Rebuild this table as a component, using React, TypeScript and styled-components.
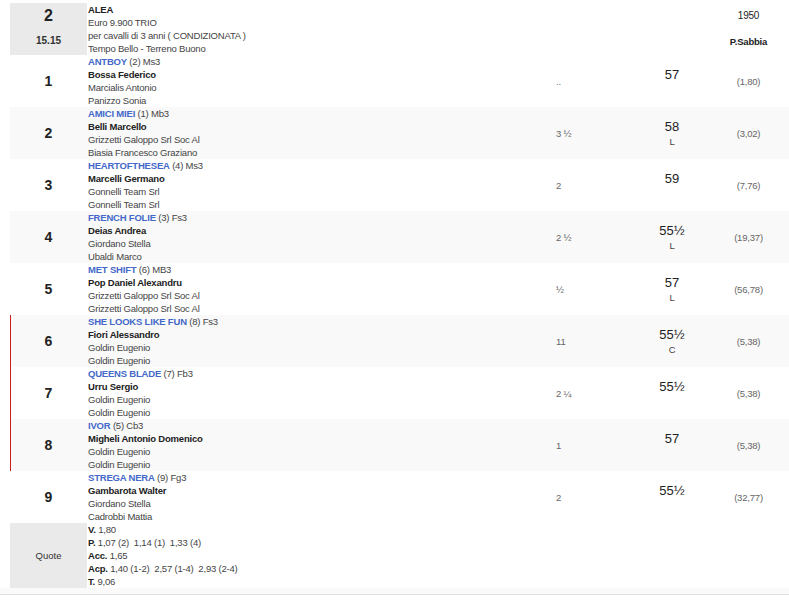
import styled, { createGlobalStyle } from 'styled-components';

const GlobalStyle = createGlobalStyle`
    body {
        margin: 0;
        background: #ffffff;
        font-family: "Liberation Sans", Arial, sans-serif;
        font-size: 9.5px;
        letter-spacing: -0.2px;
        color: #444444;
    }
`;

const Page = styled.div`
    padding: 3px 0 0 10px;
`;

const Row = styled.div<{$alt?: boolean; $flag?: boolean}>`
    display: grid;
    grid-template-columns: 77px 469px 80px 72px 1fr;
    background-color: ${props => (props.$alt ? '#f9f9f9' : '#ffffff')};
    box-shadow: ${props => (props.$flag ? 'inset 1px 0 0 #cc1d1d' : 'none')};
`;

const NumCell = styled.div<{$head?: boolean}>`
    display: flex;
    flex-direction: column;
    align-items: center;
    justify-content: center;
    background-color: ${props => (props.$head ? '#eaeaea' : 'transparent')};
    color: #222222;
    font-size: 14px;
    font-weight: bold;
    letter-spacing: 0;
`;

const HeadCell = styled(NumCell)`
    justify-content: flex-start;
    padding-top: 3px;
    gap: 8px;
`;

const RaceNumber = styled.span`
    font-size: 16px;
    line-height: 20px;
`;

const RaceTime = styled.span`
    font-size: 10px;
    line-height: 13px;
    color: #333333;
`;

const QuoteLabel = styled.span`
    font-size: 9.5px;
    font-weight: normal;
    color: #333333;
`;

const Info = styled.div`
    display: flex;
    flex-direction: column;
    padding-left: 1px;
    line-height: 13px;
    white-space: pre;
`;

const Strong = styled.span`
    font-weight: bold;
    color: #222222;
`;

const HorseName = styled.span`
    font-weight: bold;
    color: #4468c9;
`;

const DistCell = styled.div`
    display: flex;
    align-items: center;
    font-size: 9.5px;
    color: #666666;
`;

const WeightCell = styled.div`
    display: flex;
    flex-direction: column;
    align-items: center;
    justify-content: center;
`;

const Weight = styled.span`
    font-size: 13px;
    line-height: 16px;
    letter-spacing: 0;
    color: #222222;
`;

const Blinker = styled.span`
    line-height: 13px;
    height: 13px;
    color: #444444;
`;

const OddsCell = styled.div`
    display: flex;
    align-items: center;
    justify-content: center;
    color: #666666;
`;

const HeadInfoCell = styled.div`
    display: flex;
    flex-direction: column;
    align-items: center;
    padding-top: 6px;
    gap: 13px;
    font-size: 10px;
    line-height: 13px;
    color: #222222;
`;

const Track = styled.span`
    font-size: 9.5px;
    font-weight: bold;
`;

const Footer = styled.div`
    height: 6px;
    background-color: #fafafa;
    border-bottom: 1px solid #dedede;
`;

interface Runner {
    pos: number;
    name: string;
    extra: string;
    jockey: string;
    trainer: string;
    owner: string;
    dist: string;
    weight: string;
    blinker: string;
    odds: string;
}

const runners: Runner[] = [
    {pos: 1, name: 'ANTBOY', extra: ' (2) Ms3', jockey: 'Bossa Federico', trainer: 'Marcialis Antonio', owner: 'Panizzo Sonia', dist: '..', weight: '57', blinker: '', odds: '(1,80)'},
    {pos: 2, name: 'AMICI MIEI', extra: ' (1) Mb3', jockey: 'Belli Marcello', trainer: 'Grizzetti Galoppo Srl Soc Al', owner: 'Biasia Francesco Graziano', dist: '3 ½', weight: '58', blinker: 'L', odds: '(3,02)'},
    {pos: 3, name: 'HEARTOFTHESEA', extra: ' (4) Ms3', jockey: 'Marcelli Germano', trainer: 'Gonnelli Team Srl', owner: 'Gonnelli Team Srl', dist: '2', weight: '59', blinker: '', odds: '(7,76)'},
    {pos: 4, name: 'FRENCH FOLIE', extra: ' (3) Fs3', jockey: 'Deias Andrea', trainer: 'Giordano Stella', owner: 'Ubaldi Marco', dist: '2 ½', weight: '55½', blinker: 'L', odds: '(19,37)'},
    {pos: 5, name: 'MET SHIFT', extra: ' (6) MB3', jockey: 'Pop Daniel Alexandru', trainer: 'Grizzetti Galoppo Srl Soc Al', owner: 'Grizzetti Galoppo Srl Soc Al', dist: '½', weight: '57', blinker: 'L', odds: '(56,78)'},
    {pos: 6, name: 'SHE LOOKS LIKE FUN', extra: ' (8) Fs3', jockey: 'Fiori Alessandro', trainer: 'Goldin Eugenio', owner: 'Goldin Eugenio', dist: '11', weight: '55½', blinker: 'C', odds: '(5,38)'},
    {pos: 7, name: 'QUEENS BLADE', extra: ' (7) Fb3', jockey: 'Urru Sergio', trainer: 'Goldin Eugenio', owner: 'Goldin Eugenio', dist: '2 ¼', weight: '55½', blinker: '', odds: '(5,38)'},
    {pos: 8, name: 'IVOR', extra: ' (5) Cb3', jockey: 'Migheli Antonio Domenico', trainer: 'Goldin Eugenio', owner: 'Goldin Eugenio', dist: '1', weight: '57', blinker: '', odds: '(5,38)'},
    {pos: 9, name: 'STREGA NERA', extra: ' (9) Fg3', jockey: 'Gambarota Walter', trainer: 'Giordano Stella', owner: 'Cadrobbi Mattia', dist: '2', weight: '55½', blinker: '', odds: '(32,77)'},
];

const App = () => {
    return (
        <>
            <GlobalStyle />
            <Page>
                <Row>
                    <HeadCell $head>
                        <RaceNumber>2</RaceNumber>
                        <RaceTime>15.15</RaceTime>
                    </HeadCell>
                    <Info>
                        <Strong>ALEA</Strong>
                        <span>Euro 9.900 TRIO</span>
                        <span>per cavalli di 3 anni ( CONDIZIONATA )</span>
                        <span>Tempo Bello - Terreno Buono</span>
                    </Info>
                    <div />
                    <div />
                    <HeadInfoCell>
                        <span>1950</span>
                        <Track>P.Sabbia</Track>
                    </HeadInfoCell>
                </Row>
                {runners.map(r => (
                    <Row key={r.pos} $alt={r.pos % 2 === 0} $flag={r.pos >= 6 && r.pos <= 8}>
                        <NumCell>{r.pos}</NumCell>
                        <Info>
                            <span>
                                <HorseName>{r.name}</HorseName>
                                {r.extra}
                            </span>
                            <Strong>{r.jockey}</Strong>
                            <span>{r.trainer}</span>
                            <span>{r.owner}</span>
                        </Info>
                        <DistCell>{r.dist}</DistCell>
                        <WeightCell>
                            <Weight>{r.weight}</Weight>
                            <Blinker>{r.blinker}</Blinker>
                        </WeightCell>
                        <OddsCell>{r.odds}</OddsCell>
                    </Row>
                ))}
                <Row>
                    <NumCell $head>
                        <QuoteLabel>Quote</QuoteLabel>
                    </NumCell>
                    <Info>
                        <span><Strong>V.</Strong> 1,80</span>
                        <span><Strong>P.</Strong> 1,07 (2)  1,14 (1)  1,33 (4)</span>
                        <span><Strong>Acc.</Strong> 1,65</span>
                        <span><Strong>Acp.</Strong> 1,40 (1-2)  2,57 (1-4)  2,93 (2-4)</span>
                        <span><Strong>T.</Strong> 9,06</span>
                    </Info>
                    <div />
                    <div />
                    <div />
                </Row>
            </Page>
            <Footer />
        </>
    );
};

export default App;
